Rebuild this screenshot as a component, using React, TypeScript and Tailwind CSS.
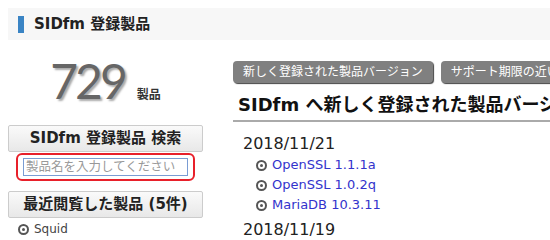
const font = "font-['DejaVu_Sans','Noto_Sans_CJK_JP',sans-serif]";

const items = ["OpenSSL 1.1.1a", "OpenSSL 1.0.2q", "MariaDB 10.3.11"];

function Dot() {
  return (
    <span className="inline-flex h-[11px] w-[11px] items-center justify-center rounded-full border-2 border-[#555]">
      <span className="h-[3px] w-[3px] rounded-full bg-[#555]" />
    </span>
  );
}

export default function App() {
  return (
    <div className={`${font} h-[240px] w-[550px] overflow-hidden bg-white pt-2 pl-2`}>
      <div className="flex h-[32px] items-center bg-[#f7f7f7] pl-[10px]">
        <div className="h-[17px] w-[6px] bg-[#3a84c4]" />
        <span className="ml-[10px] text-[15px] font-bold text-[#222]">SIDfm 登録製品</span>
      </div>

      <div className="flex">
        <div className="w-[195px] shrink-0">
          <div className="flex h-[85px] items-end justify-center pb-[20px]">
            <div className="flex items-baseline">
              <span className="font-['Lato',sans-serif] text-[48px] font-normal leading-none tracking-[-3px] text-[#666] [text-shadow:2px_2px_2px_#aaa]">
                729
              </span>
              <span className="ml-[12px] text-[12px] font-bold text-[#333]">製品</span>
            </div>
          </div>
          <div className="flex h-[27px] items-center justify-center rounded-[2px] border border-[#ccc] bg-gradient-to-b from-[#fafafa] to-[#e8e8e8] text-[15px] font-bold text-[#222]">
            SIDfm 登録製品 検索
          </div>
          <div className="ml-[8px] mt-[1px] w-[179px] rounded-[6px] border-2 border-[#e8202a] px-[5px] py-[3px]">
            <input
              placeholder="製品名を入力してください"
              className={`${font} block h-[18px] w-full border border-[#7a9cd3] px-[2px] text-[12.5px] text-[#333] outline-none placeholder:text-[#999]`}
            />
          </div>
          <div className="mt-[10px] flex h-[27px] items-center justify-center rounded-[2px] border border-[#ccc] bg-gradient-to-b from-[#fafafa] to-[#e8e8e8] text-[15px] font-bold text-[#222]">
            最近閲覧した製品 (5件)
          </div>
          <div className="mt-[3px] flex h-[16px] items-center gap-[5px] pl-[10px] text-[12px] text-[#444]">
            <Dot />
            <span>Squid</span>
          </div>
        </div>

        <div className="ml-[30px] flex-1 overflow-hidden">
          <div className="mt-[21px] flex gap-[8px] whitespace-nowrap">
            <div className="flex h-[22px] items-center rounded-[4px] bg-[#808080] px-[10px] text-[12px] text-white shadow-[1px_1px_1px_#444]">
              新しく登録された製品バージョン
            </div>
            <div className="flex h-[22px] items-center rounded-[4px] bg-[#808080] px-[10px] text-[12px] text-white shadow-[1px_1px_1px_#444]">
              サポート期限の近い製品
            </div>
          </div>
          <div className="mt-[11px] whitespace-nowrap border-b-2 border-[#aaa] pb-[4px] pl-[5px] text-[18px] font-bold leading-[22px] text-[#111]">
            SIDfm へ新しく登録された製品バージョン
          </div>
          <div className="mt-[11px] pl-[10px] text-[16px] leading-[22px] text-[#222]">2018/11/21</div>
          {items.map((name) => (
            <div key={name} className="flex h-[20px] items-center gap-[5px] pl-[23px] text-[13px] text-[#3333cc]">
              <Dot />
              <span>{name}</span>
            </div>
          ))}
          <div className="mt-[4px] pl-[10px] text-[16px] leading-[22px] text-[#222]">2018/11/19</div>
        </div>
      </div>
    </div>
  );
}
